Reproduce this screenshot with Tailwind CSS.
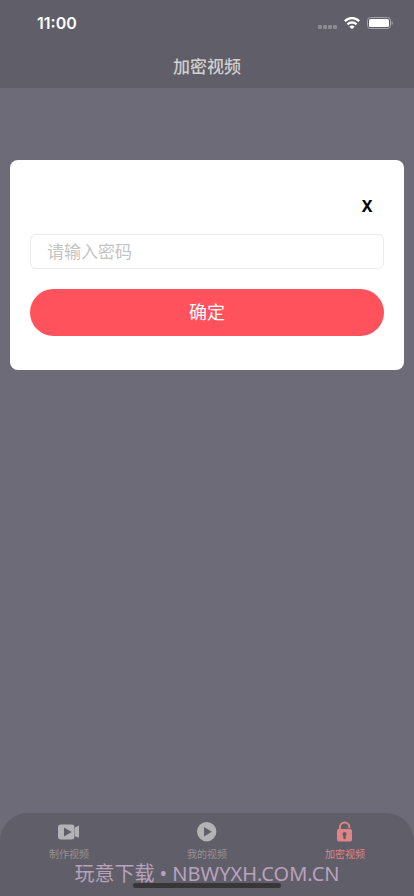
<!DOCTYPE html>
<html lang="zh-CN">
<head>
<meta charset="utf-8">
<meta name="viewport" content="width=device-width, initial-scale=1">
<title>加密视频</title>
<script src="https://cdn.jsdelivr.net/npm/@tailwindcss/browser@4"></script>
</head>
<body class="flex min-h-screen flex-col bg-[#6d6b77] font-['Inter','Noto_Sans_CJK_SC',sans-serif]">
  <header class="bg-[#605e68]">
    <div class="flex h-11 items-center justify-between pt-[2px] pr-[21px] pl-[37px]">
      <time class="text-base font-semibold text-white">11:00</time>
      <div class="flex items-center gap-[7px]">
        <svg class="h-3 w-[19px]" viewBox="0 0 19 12" fill="#8c8a93" aria-hidden="true">
          <rect y="8" width="4" height="4" rx="1"/><rect x="5" y="8" width="4" height="4" rx="1"/><rect x="10" y="8" width="4" height="4" rx="1"/><rect x="15" y="8" width="4" height="4" rx="1"/>
        </svg>
        <svg class="h-3 w-4" viewBox="0 0 16 12" fill="none" stroke="#fff" stroke-width="2.4" aria-hidden="true">
          <path d="M.8 4.1C4.900.1 11.100.1 15.200 4.100"/><path d="M3.400 7.300C6 4.900 10 4.900 12.600 7.300"/><path d="M8 12.200 5.300 9.500C6.900 8.100 9.100 8.100 10.700 9.500Z" fill="#fff" stroke="none"/>
        </svg>
        <svg class="h-3 w-[26px]" viewBox="0 0 26 12" aria-hidden="true">
          <rect x=".5" y=".5" width="23" height="11" rx="3" fill="none" stroke="#a3a1a9"/><rect x="2" y="2" width="20" height="8" rx="1.6" fill="#fff"/><path d="M24.600 4v4c1.600-.7 1.600-3.300 0-4Z" fill="#a3a1a9"/>
        </svg>
      </div>
    </div>
    <h1 class="flex h-11 items-center justify-center pt-1 text-[17px] font-medium text-[#d0cfd0]">加密视频</h1>
  </header>

  <main class="flex-1 px-[10px] pt-[72px]">
    <form class="flex flex-col rounded-lg bg-white px-5 pt-8 pb-[34px]">
      <button type="button" aria-label="关闭" class="mr-2 h-7 w-[18px] self-end text-center font-['Noto_Sans',sans-serif] text-base font-bold text-black">X</button>
      <input type="password" aria-label="密码" placeholder="请输入密码" class="mt-[14px] h-[35px] w-full rounded-md border border-[#ebebeb] px-4 text-[17px] text-black outline-none placeholder:text-[#c4c4c4]">
      <button type="submit" class="mt-5 h-[47px] w-full rounded-full bg-[#ff525c] text-lg text-white">确定</button>
    </form>
  </main>

  <footer class="relative rounded-t-[28px] bg-[#605e68] pb-[34px]">
    <nav class="grid h-[49px] grid-cols-3 text-[10px] leading-4 text-[#929196]">
      <a href="#" class="flex flex-col items-center gap-[3px] pt-2">
        <svg class="size-[22px]" viewBox="0 0 22 22" aria-hidden="true">
          <path fill="#b3b2b5" fill-rule="evenodd" d="M3 3.500h10.500a3 3 0 0 1 3 3V7l3.200-2c.8-.5 1.300-.1 1.300.7v10c0 .8-.5 1.200-1.300.7L16.500 14.800v.7a3 3 0 0 1-3 3H3a3 3 0 0 1-3-3V6.500a3 3 0 0 1 3-3ZM6 6.500v9l7.700-4.500Z"/>
          <path stroke="#605e68" stroke-width=".4" d="M16.500 7v8"/>
        </svg>
        <span>制作视频</span>
      </a>
      <a href="#" class="flex flex-col items-center gap-[3px] pt-2">
        <svg class="size-[22px]" viewBox="0 0 22 22" aria-hidden="true">
          <path fill="#b3b2b5" fill-rule="evenodd" d="M10.700 1a9.700 9.700 0 1 1 0 19.400 9.700 9.700 0 0 1 0-19.400ZM8 6v9.400l7.800-4.700Z"/>
        </svg>
        <span>我的视频</span>
      </a>
      <a href="#" aria-current="page" class="flex flex-col items-center gap-[3px] pt-2 text-[#df8586]">
        <svg class="size-[22px]" viewBox="0 0 22 22" aria-hidden="true">
          <path d="M5.900 9V6.200a4.700 4.700 0 0 1 9.400 0v1" fill="none" stroke="#df8586" stroke-width="2"/>
          <rect x="3" y="8" width="15" height="12.500" rx="1.800" fill="#df8586"/>
          <path d="M10.500 11a2.200 2.200 0 0 1 1.200 4V17a1.200 1.200 0 0 1-2.400 0v-2a2.200 2.200 0 0 1 1.200-4Z" fill="#605e68"/>
        </svg>
        <span>加密视频</span>
      </a>
    </nav>
    <div class="absolute bottom-2 left-1/2 h-[5px] w-[148px] -translate-x-1/2 rounded-full bg-[#373639]"></div>
    <p class="absolute inset-x-0 bottom-2 text-center font-['Noto_Sans','Noto_Sans_CJK_SC',sans-serif] text-xl whitespace-nowrap text-[#b8a2bd]">玩意下载 • NBWYXH.COM.CN</p>
  </footer>
</body>
</html>
